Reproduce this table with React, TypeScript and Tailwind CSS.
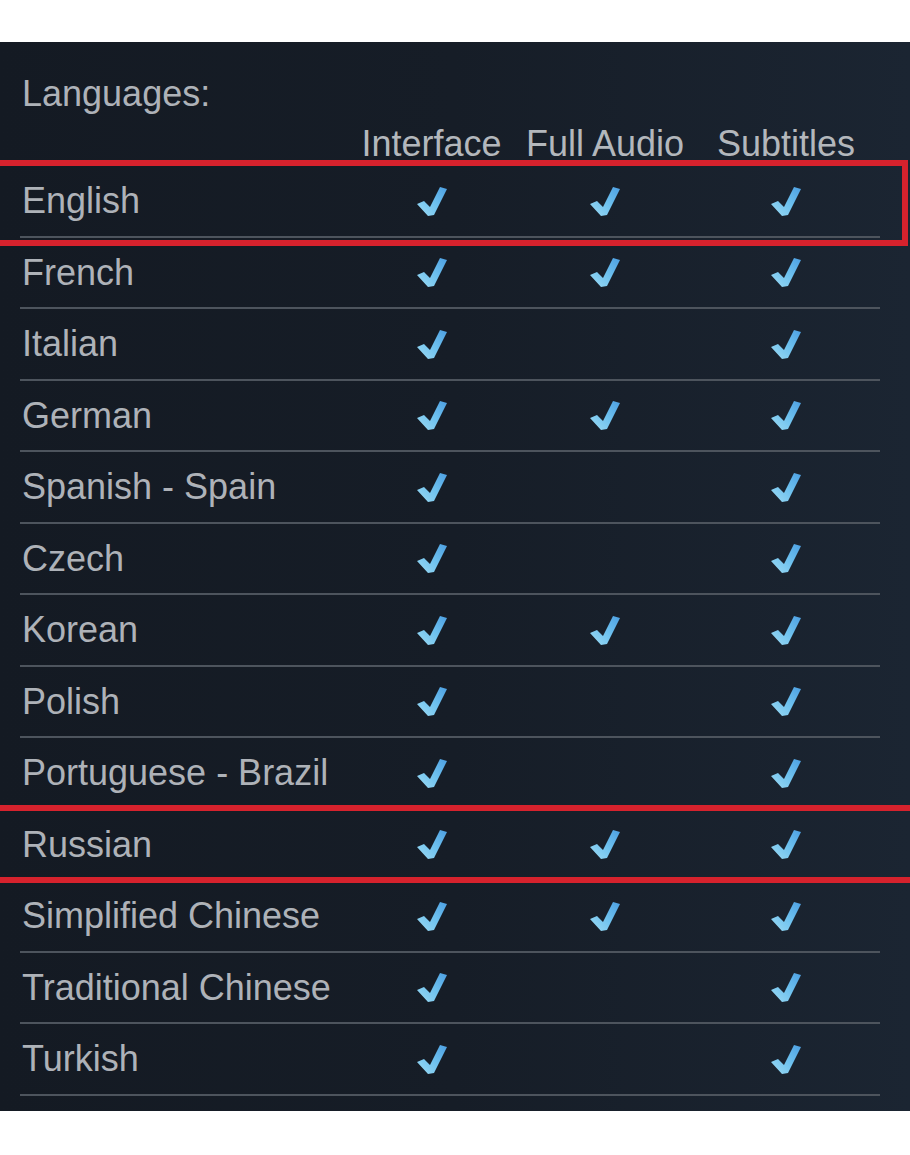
import React from 'react';

type Lang = {
  name: string;
  iface: boolean;
  audio: boolean;
  subs: boolean;
};

const languages: Lang[] = [
  { name: 'English', iface: true, audio: true, subs: true },
  { name: 'French', iface: true, audio: true, subs: true },
  { name: 'Italian', iface: true, audio: false, subs: true },
  { name: 'German', iface: true, audio: true, subs: true },
  { name: 'Spanish - Spain', iface: true, audio: false, subs: true },
  { name: 'Czech', iface: true, audio: false, subs: true },
  { name: 'Korean', iface: true, audio: true, subs: true },
  { name: 'Polish', iface: true, audio: false, subs: true },
  { name: 'Portuguese - Brazil', iface: true, audio: false, subs: true },
  { name: 'Russian', iface: true, audio: true, subs: true },
  { name: 'Simplified Chinese', iface: true, audio: true, subs: true },
  { name: 'Traditional Chinese', iface: true, audio: false, subs: true },
  { name: 'Turkish', iface: true, audio: false, subs: true },
];

function Check() {
  return (
    <svg width="30" height="30" viewBox="0 0 30 30" className="block">
      <defs>
        <linearGradient id="chk" x1="1" y1="0" x2="0" y2="1">
          <stop offset="0" stopColor="#4c9fe2" />
          <stop offset="0.5" stopColor="#6fc2ef" />
          <stop offset="1" stopColor="#9edbf3" />
        </linearGradient>
      </defs>
      <polygon points="0,18 7,15 13,21 23,1 30,3 17,29 11,30" fill="url(#chk)" />
    </svg>
  );
}

function Cell({ on }: { on: boolean }) {
  return <div className="flex items-center justify-center">{on && <Check />}</div>;
}

export default function App() {
  return (
    <div className="bg-white pt-[42px] h-[1155px] w-[910px]" style={{ fontFamily: '"Liberation Sans", Arial, sans-serif' }}>
      <div className="relative bg-gradient-to-r from-[#141a23] via-[#161d27] to-[#1b2532] pt-[31px] pb-[15px] overflow-hidden">
        <div className="pl-[22px] text-[36px] leading-[41px] text-[#aeb2b8]">Languages:</div>
        <div className="mt-[9px] pl-[20px] grid grid-cols-[338px_147px_200px_162px] text-[36px] leading-[41px] text-[#b3b7bc]">
          <div />
          <div className="text-center">Interface</div>
          <div className="text-center">Full Audio</div>
          <div className="text-center">Subtitles</div>
        </div>
        <div className="ml-[20px] w-[860px] border-t-2 border-[#4d545d]">
          {languages.map((l) => (
            <div
              key={l.name}
              className="grid grid-cols-[338px_147px_200px_162px] items-center h-[71.5px] border-b-2 border-[#4d545d]"
            >
              <div className="pl-[2px] text-[36px] leading-[41px] text-[#aeb2b8] whitespace-nowrap">{l.name}</div>
              <Cell on={l.iface} />
              <Cell on={l.audio} />
              <Cell on={l.subs} />
            </div>
          ))}
        </div>

        <div className="absolute left-0 top-[118px] w-[908px] h-[86px] border-y-[6px] border-r-[6px] border-[#d6222d]" />
        <div className="absolute left-0 right-0 top-[763px] h-[6px] bg-[#d6222d]" />
        <div className="absolute left-0 right-0 top-[835px] h-[6px] bg-[#d6222d]" />
      </div>
    </div>
  );
}
